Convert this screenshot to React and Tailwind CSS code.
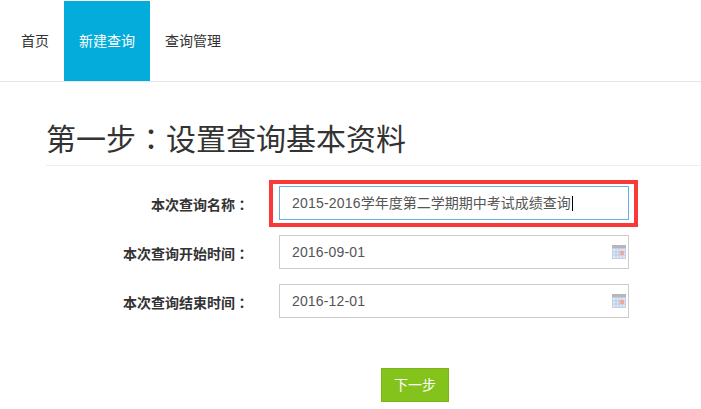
const CalendarIcon = () => (
  <svg width="14" height="14" viewBox="0 0 14 14" className="absolute right-[2px] top-[9px]">
    <rect x="0" y="0" width="14" height="14" fill="#c4cfe2" />
    <rect x="0" y="0" width="14" height="3" fill="#b4b6bc" />
    <rect x="1" y="4" width="12" height="9" fill="#e2eaf8" />
    <path d="M1 7h12M1 10h12M4 4v9M7 4v9M10 4v9" stroke="#b7c8e6" strokeWidth="1" />
    <rect x="8" y="6" width="4" height="4" fill="#f0a898" />
  </svg>
);

// full-width colon centred in its cell, as in the screenshot
const Colon = () => <span className="font-['Noto_Sans_CJK_TC',sans-serif]">：</span>;

const DateField = ({ label, value }) => (
  <div className="flex items-center">
    <label className="w-[249px] mr-[30px] pt-[3px] text-right text-sm font-bold text-[#333]">{label}<Colon /></label>
    <div className="relative w-[350px] h-[34px] border border-[#ccc] pl-3 leading-[32px] text-sm tracking-[0.15px] text-[#555]">
      {value}
      <CalendarIcon />
    </div>
  </div>
);

const App = () => (
  <div className="w-[701px] h-[409px] overflow-hidden bg-white font-['Liberation_Sans','Noto_Sans_CJK_SC',sans-serif] text-[#333]">
    <nav className="flex h-[82px] pt-px pl-[6px] border-b border-[#e7e7e7] text-sm">
      <a className="px-[15px] leading-[81px]">首页</a>
      <a className="w-[86px] text-center leading-[81px] bg-[#04acdc] text-white">新建查询</a>
      <a className="px-[15px] leading-[81px]">查询管理</a>
    </nav>

    <div className="pl-[46px]">
      <h1 className="h-[84px] pt-[36px] border-b border-[#eee] text-[30px] leading-[38px] font-normal">第一步<Colon />设置查询基本资料</h1>
    </div>

    <form className="flex flex-col gap-[15px] pt-5">
      <div className="flex items-center">
        <label className="w-[249px] mr-[30px] pt-[3px] text-right text-sm font-bold">本次查询名称<Colon /></label>
        <div className="relative w-[350px] h-[34px] border border-[#66afe9] pl-3 leading-[32px] text-sm text-[#555]">
          <span className="tracking-[0.2px]">2015-2016</span>学年度第二学期期中考试成绩查询<span className="inline-block w-px h-[15px] ml-px align-[-3px] bg-black" />
          <div className="absolute -left-[11px] -right-[10px] -top-[7px] -bottom-[8px] border-[4px] border-[#f93838]" />
        </div>
      </div>
      <DateField label="本次查询开始时间" value="2016-09-01" />
      <DateField label="本次查询结束时间" value="2016-12-01" />
    </form>

    <div className="pt-[50px] pl-[381px]">
      <button className="w-[68px] h-[34px] border border-[#7db516] bg-[#84c31c] text-white text-sm">下一步</button>
    </div>
  </div>
);

export default App;
